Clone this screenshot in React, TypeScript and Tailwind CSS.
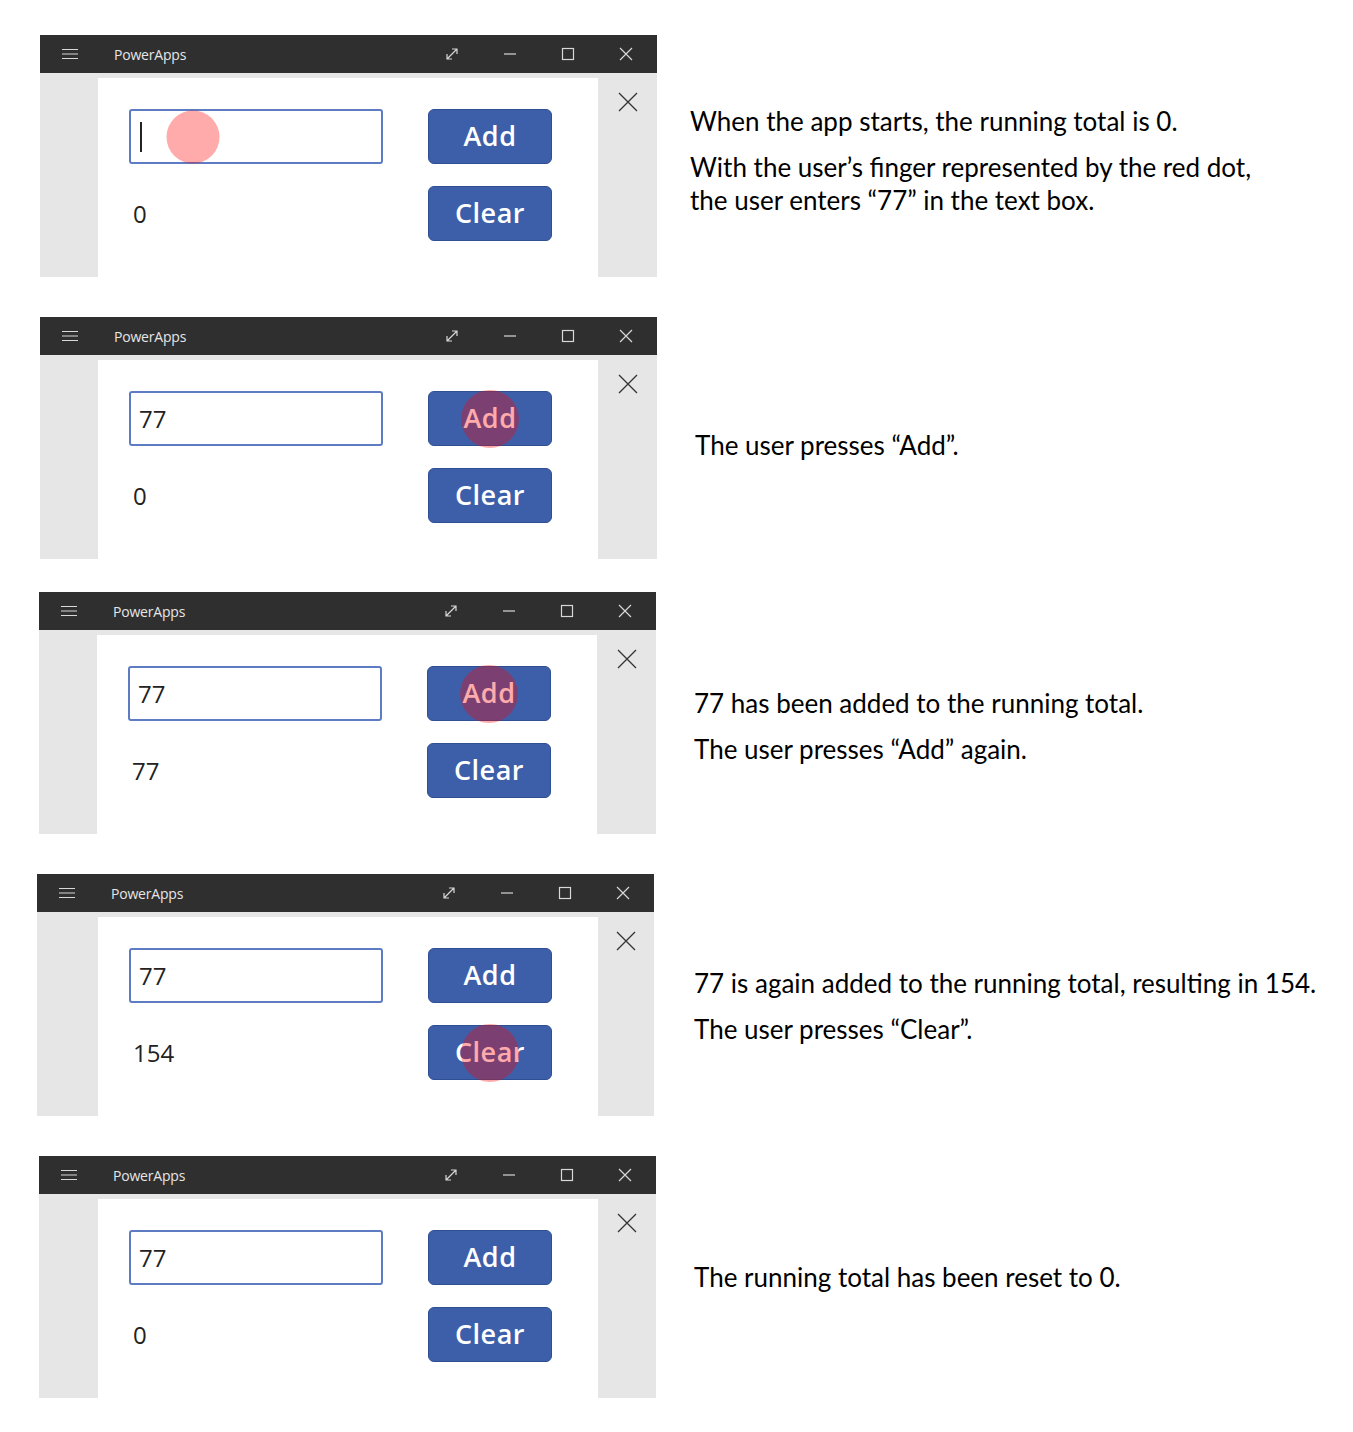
import React from "react";

type Dot = { on: "input" | "add" | "clear" };

type Step = {
  left: number;
  inset: number;
  gap: number;
  textLeft: number;
  textTop: number;
  value: string;
  total: string;
  dot?: Dot;
  lines: string[][];
};

const steps: Step[] = [
  {
    left: 40,
    inset: 58,
    gap: 35,
    textLeft: 33,
    textTop: 70,
    value: "",
    total: "0",
    dot: { on: "input" },
    lines: [
      ["When the app starts, the running total is 0."],
      ["With the user\u2019s finger represented by the red dot,", "the user enters \u201c77\u201d in the text box."],
    ],
  },
  {
    left: 40,
    inset: 58,
    gap: 40,
    textLeft: 38,
    textTop: 112,
    value: "77",
    total: "0",
    dot: { on: "add" },
    lines: [["The user presses \u201cAdd\u201d."]],
  },
  {
    left: 39,
    inset: 58,
    gap: 33,
    textLeft: 38,
    textTop: 95,
    value: "77",
    total: "77",
    dot: { on: "add" },
    lines: [["77 has been added to the running total."], ["The user presses \u201cAdd\u201d again."]],
  },
  {
    left: 37,
    inset: 61,
    gap: 40,
    textLeft: 40,
    textTop: 93,
    value: "77",
    total: "154",
    dot: { on: "clear" },
    lines: [["77 is again added to the running total, resulting in 154."], ["The user presses \u201cClear\u201d."]],
  },
  {
    left: 39,
    inset: 59,
    gap: 40,
    textLeft: 38,
    textTop: 105,
    value: "77",
    total: "0",
    lines: [["The running total has been reset to 0."]],
  },
];

function FingerDot() {
  return (
    <span className="pointer-events-none absolute top-1/2 left-1/2 h-[58px] w-[58px] -translate-x-1/2 -translate-y-1/2 rounded-full bg-[rgba(255,0,0,0.33)]" />
  );
}

function TitleBar() {
  return (
    <div className="flex h-[38px] items-center bg-[#2f2f2f] text-[#e6e6e6]">
      <svg width="16" height="12" viewBox="0 0 16 12" className="ml-[22px]" stroke="#d8d8d8" strokeWidth="1.2">
        <path d="M0 1.5h16M0 6h16M0 10.5h16" />
      </svg>
      <span className="ml-[36px] font-['Open_Sans',sans-serif] text-[14px] tracking-[-0.2px]">PowerApps</span>
      <div className="ml-auto flex items-center">
        <div className="flex w-[58px] justify-center">
          <svg width="14" height="14" viewBox="0 0 14 14" fill="none" stroke="#d8d8d8" strokeWidth="1.2">
            <path d="M2 12L12 2M7 2h5v5M2 7v5h5" />
          </svg>
        </div>
        <div className="flex w-[58px] justify-center">
          <svg width="14" height="14" viewBox="0 0 14 14" fill="none" stroke="#d8d8d8" strokeWidth="1.2">
            <path d="M1 7h12" />
          </svg>
        </div>
        <div className="flex w-[58px] justify-center">
          <svg width="14" height="14" viewBox="0 0 14 14" fill="none" stroke="#d8d8d8" strokeWidth="1.2">
            <rect x="1.5" y="1.5" width="11" height="11" />
          </svg>
        </div>
        <div className="mr-[2px] flex w-[58px] justify-center">
          <svg width="14" height="14" viewBox="0 0 14 14" fill="none" stroke="#d8d8d8" strokeWidth="1.2">
            <path d="M1 1l12 12M13 1L1 13" />
          </svg>
        </div>
      </div>
    </div>
  );
}

function AppButton({ label, pressed }: { label: string; pressed?: boolean }) {
  return (
    <div className="relative flex h-[55px] w-[124px] items-center justify-center rounded-[6px] border border-[#2f4f93] bg-[#3d5fa9] font-['Open_Sans',sans-serif] text-[27px] font-semibold tracking-[0.5px] text-white">
      {label}
      {pressed && <FingerDot />}
    </div>
  );
}

function PhoneWindow({ step }: { step: Step }) {
  return (
    <div className="flex w-[617px] flex-col" style={{ marginLeft: step.left }}>
      <TitleBar />
      <div className="flex h-[204px] bg-[#e6e6e6]">
        <div style={{ width: step.inset }} />
        <div className="mt-[5px] flex w-[500px] flex-col gap-[22px] bg-white pt-[31px] pl-[31px]">
          <div className="flex items-center gap-[45px]">
            <div className="relative flex h-[55px] w-[254px] items-center rounded-[3px] border-2 border-[#5d7cc4] bg-white pl-[8px] font-['Open_Sans',sans-serif] text-[24px] text-[#222]">
              {step.value === "" ? <span className="ml-[1px] h-[30px] w-[1.5px] bg-[#222]" /> : step.value}
              {step.dot?.on === "input" && (
                <span className="pointer-events-none absolute top-1/2 left-[62px] h-[53px] w-[53px] -translate-x-1/2 -translate-y-1/2 rounded-full bg-[rgba(255,0,0,0.33)]" />
              )}
            </div>
            <AppButton label="Add" pressed={step.dot?.on === "add"} />
          </div>
          <div className="flex items-center gap-[45px]">
            <div className="w-[254px] pl-[4px] font-['Open_Sans',sans-serif] text-[24px] text-[#222]">{step.total}</div>
            <AppButton label="Clear" pressed={step.dot?.on === "clear"} />
          </div>
        </div>
        <div className="flex flex-1 justify-center pt-[18px]">
          <svg width="22" height="22" viewBox="0 0 22 22" fill="none" stroke="#333" strokeWidth="1.3">
            <path d="M2 2l18 18M20 2L2 20" />
          </svg>
        </div>
      </div>
    </div>
  );
}

export default function App() {
  return (
    <div className="flex min-h-[1432px] w-[1353px] flex-col bg-white">
      {steps.map((step, i) => (
        <div key={i} className="flex items-start" style={{ marginTop: step.gap }}>
          <PhoneWindow step={step} />
          <div
            className="flex flex-col gap-[13px] font-['Lato',sans-serif] text-[26px] leading-[33px] text-black"
            style={{ marginLeft: step.textLeft, paddingTop: step.textTop }}
          >
            {step.lines.map((para, j) => (
              <p key={j}>
                {para.map((line, k) => (
                  <span key={k} className="block whitespace-nowrap">
                    {line}
                  </span>
                ))}
              </p>
            ))}
          </div>
        </div>
      ))}
    </div>
  );
}
